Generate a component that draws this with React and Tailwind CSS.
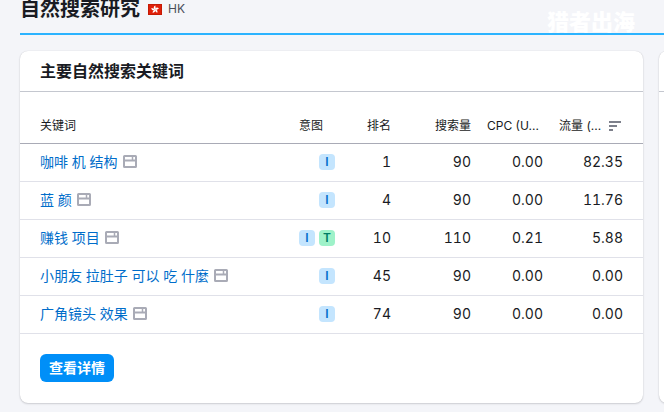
const rows = [
  { keyword: "咖啡 机 结构", intents: ["I"], rank: "1", volume: "90", cpc: "0.00", traffic: "82.35" },
  { keyword: "蓝 颜", intents: ["I"], rank: "4", volume: "90", cpc: "0.00", traffic: "11.76" },
  { keyword: "赚钱 项目", intents: ["I", "T"], rank: "10", volume: "110", cpc: "0.21", traffic: "5.88" },
  { keyword: "小朋友 拉肚子 可以 吃 什麼", intents: ["I"], rank: "45", volume: "90", cpc: "0.00", traffic: "0.00" },
  { keyword: "广角镜头 效果", intents: ["I"], rank: "74", volume: "90", cpc: "0.00", traffic: "0.00" },
];

const intentStyles = {
  I: "bg-[#c4e5fe] text-[#006dca]",
  T: "bg-[#9ef2c9] text-[#007c65]",
};

function HongKongFlag() {
  return (
    <svg width="14" height="11" viewBox="0 0 14 11" aria-hidden="true">
      <rect width="14" height="11" fill="#c51a05" />
      <rect x="1" y="1" width="12" height="9" fill="#e0200a" />
      <g fill="#ffffff">
        {[0, 72, 144, 216, 288].map((angle) => (
          <path key={angle} d="M7 5.5C5.2 4.8 5.3 2.2 7.4 1.5C7 2.6 8.4 3.6 7 5.5Z" transform={`rotate(${angle} 7 5.5)`} />
        ))}
      </g>
    </svg>
  );
}

function SerpIcon() {
  return (
    <svg width="14" height="13" viewBox="0 0 14 13" fill="none" stroke="#a9abb6" strokeWidth="2" aria-hidden="true">
      <rect x="1" y="1" width="12" height="11" rx="0.5" />
      <path d="M1 5.5H13" />
      <path d="M9.5 1V5.5" strokeWidth="1.5" />
    </svg>
  );
}

function SortIcon() {
  return (
    <svg width="12" height="10" viewBox="0 0 12 10" stroke="#7d808b" strokeWidth="2" aria-hidden="true">
      <path d="M0 1H12M0 5H8M0 9H4" />
    </svg>
  );
}

function Heading({ children, className }) {
  return (
    <th scope="col" className={`border-b border-[#a9abb6] pt-[26px] pb-[9px] text-xs/4 font-normal ${className}`}>
      {children}
    </th>
  );
}

function Cell({ children, className = "" }) {
  return <td className={`h-[38px] border-b border-[#e0e1e9] pt-0 pb-0.5 ${className}`}>{children}</td>;
}

function KeywordTable() {
  return (
    <table className="w-full table-fixed border-separate border-spacing-0 text-[#191b23]">
      <colgroup>
        <col />
        <col className="w-[52px]" />
        <col className="w-14" />
        <col className="w-20" />
        <col className="w-[72px]" />
        <col className="w-[100px]" />
      </colgroup>
      <thead>
        <tr>
          <Heading className="pl-5 text-left">关键词</Heading>
          <Heading className="pl-4 text-left">意图</Heading>
          <Heading className="text-right">排名</Heading>
          <Heading className="text-right">搜索量</Heading>
          <Heading className="pl-4 text-left">CPC (U...</Heading>
          <Heading className="pr-5 pl-4 text-left">
            <span className="flex items-center gap-2 whitespace-nowrap">
              流量 (...
              <SortIcon />
            </span>
          </Heading>
        </tr>
      </thead>
      <tbody className="text-sm/5 tabular-nums">
        {rows.map((row) => (
          <tr key={row.keyword}>
            <Cell className="pl-5">
              <a href="#" className="flex items-center gap-[5px] whitespace-nowrap text-[#006dca]">
                {row.keyword}
                <SerpIcon />
              </a>
            </Cell>
            <Cell>
              <div className="flex justify-end gap-1">
                {row.intents.map((intent) => (
                  <span key={intent} className={`flex size-4 items-center justify-center rounded text-xs/4 font-semibold ${intentStyles[intent]}`}>
                    {intent}
                  </span>
                ))}
              </div>
            </Cell>
            <Cell className="text-right">{row.rank}</Cell>
            <Cell className="text-right">{row.volume}</Cell>
            <Cell className="text-right">{row.cpc}</Cell>
            <Cell className="pr-5 text-right">{row.traffic}</Cell>
          </tr>
        ))}
      </tbody>
    </table>
  );
}

const cardStyle = "rounded-lg bg-white shadow-[0_0_1px_rgba(25,27,35,0.2),0_1px_2px_rgba(25,27,35,0.16)]";

export default function App() {
  return (
    <main className="min-h-screen overflow-hidden bg-[#f4f5f9] pl-5 font-[Inter,'Noto_Sans_CJK_SC',sans-serif] text-[#191b23]">
      <header className="flex h-[35px] items-start border-b-2 border-[#2bb3ff]">
        <h1 className="text-xl/[18px] font-bold">自然搜索研究</h1>
        <div className="ml-2 flex h-[18px] items-center gap-1.5 text-xs/4 text-[#4a4d58]">
          <HongKongFlag />
          HK
        </div>
        <span className="mt-2.5 mr-[29px] ml-auto text-[22px]/6 font-black text-white">猎者出海</span>
      </header>
      <div className="mt-4 flex gap-4">
        <section className={`min-w-0 flex-1 ${cardStyle}`}>
          <h2 className="border-b border-[#c4c7cf] px-5 py-2 text-base/6 font-bold">主要自然搜索关键词</h2>
          <KeywordTable />
          <div className="px-5 pt-5 pb-[21px]">
            <button type="button" className="h-7 rounded-md bg-[#008ff8] px-[9px] text-sm/5 font-bold text-white">
              查看详情
            </button>
          </div>
        </section>
        <section className={`-mr-75 w-[305px] shrink-0 ${cardStyle}`}>
          <div className="h-[41px] border-b border-[#c4c7cf]" />
        </section>
      </div>
    </main>
  );
}
